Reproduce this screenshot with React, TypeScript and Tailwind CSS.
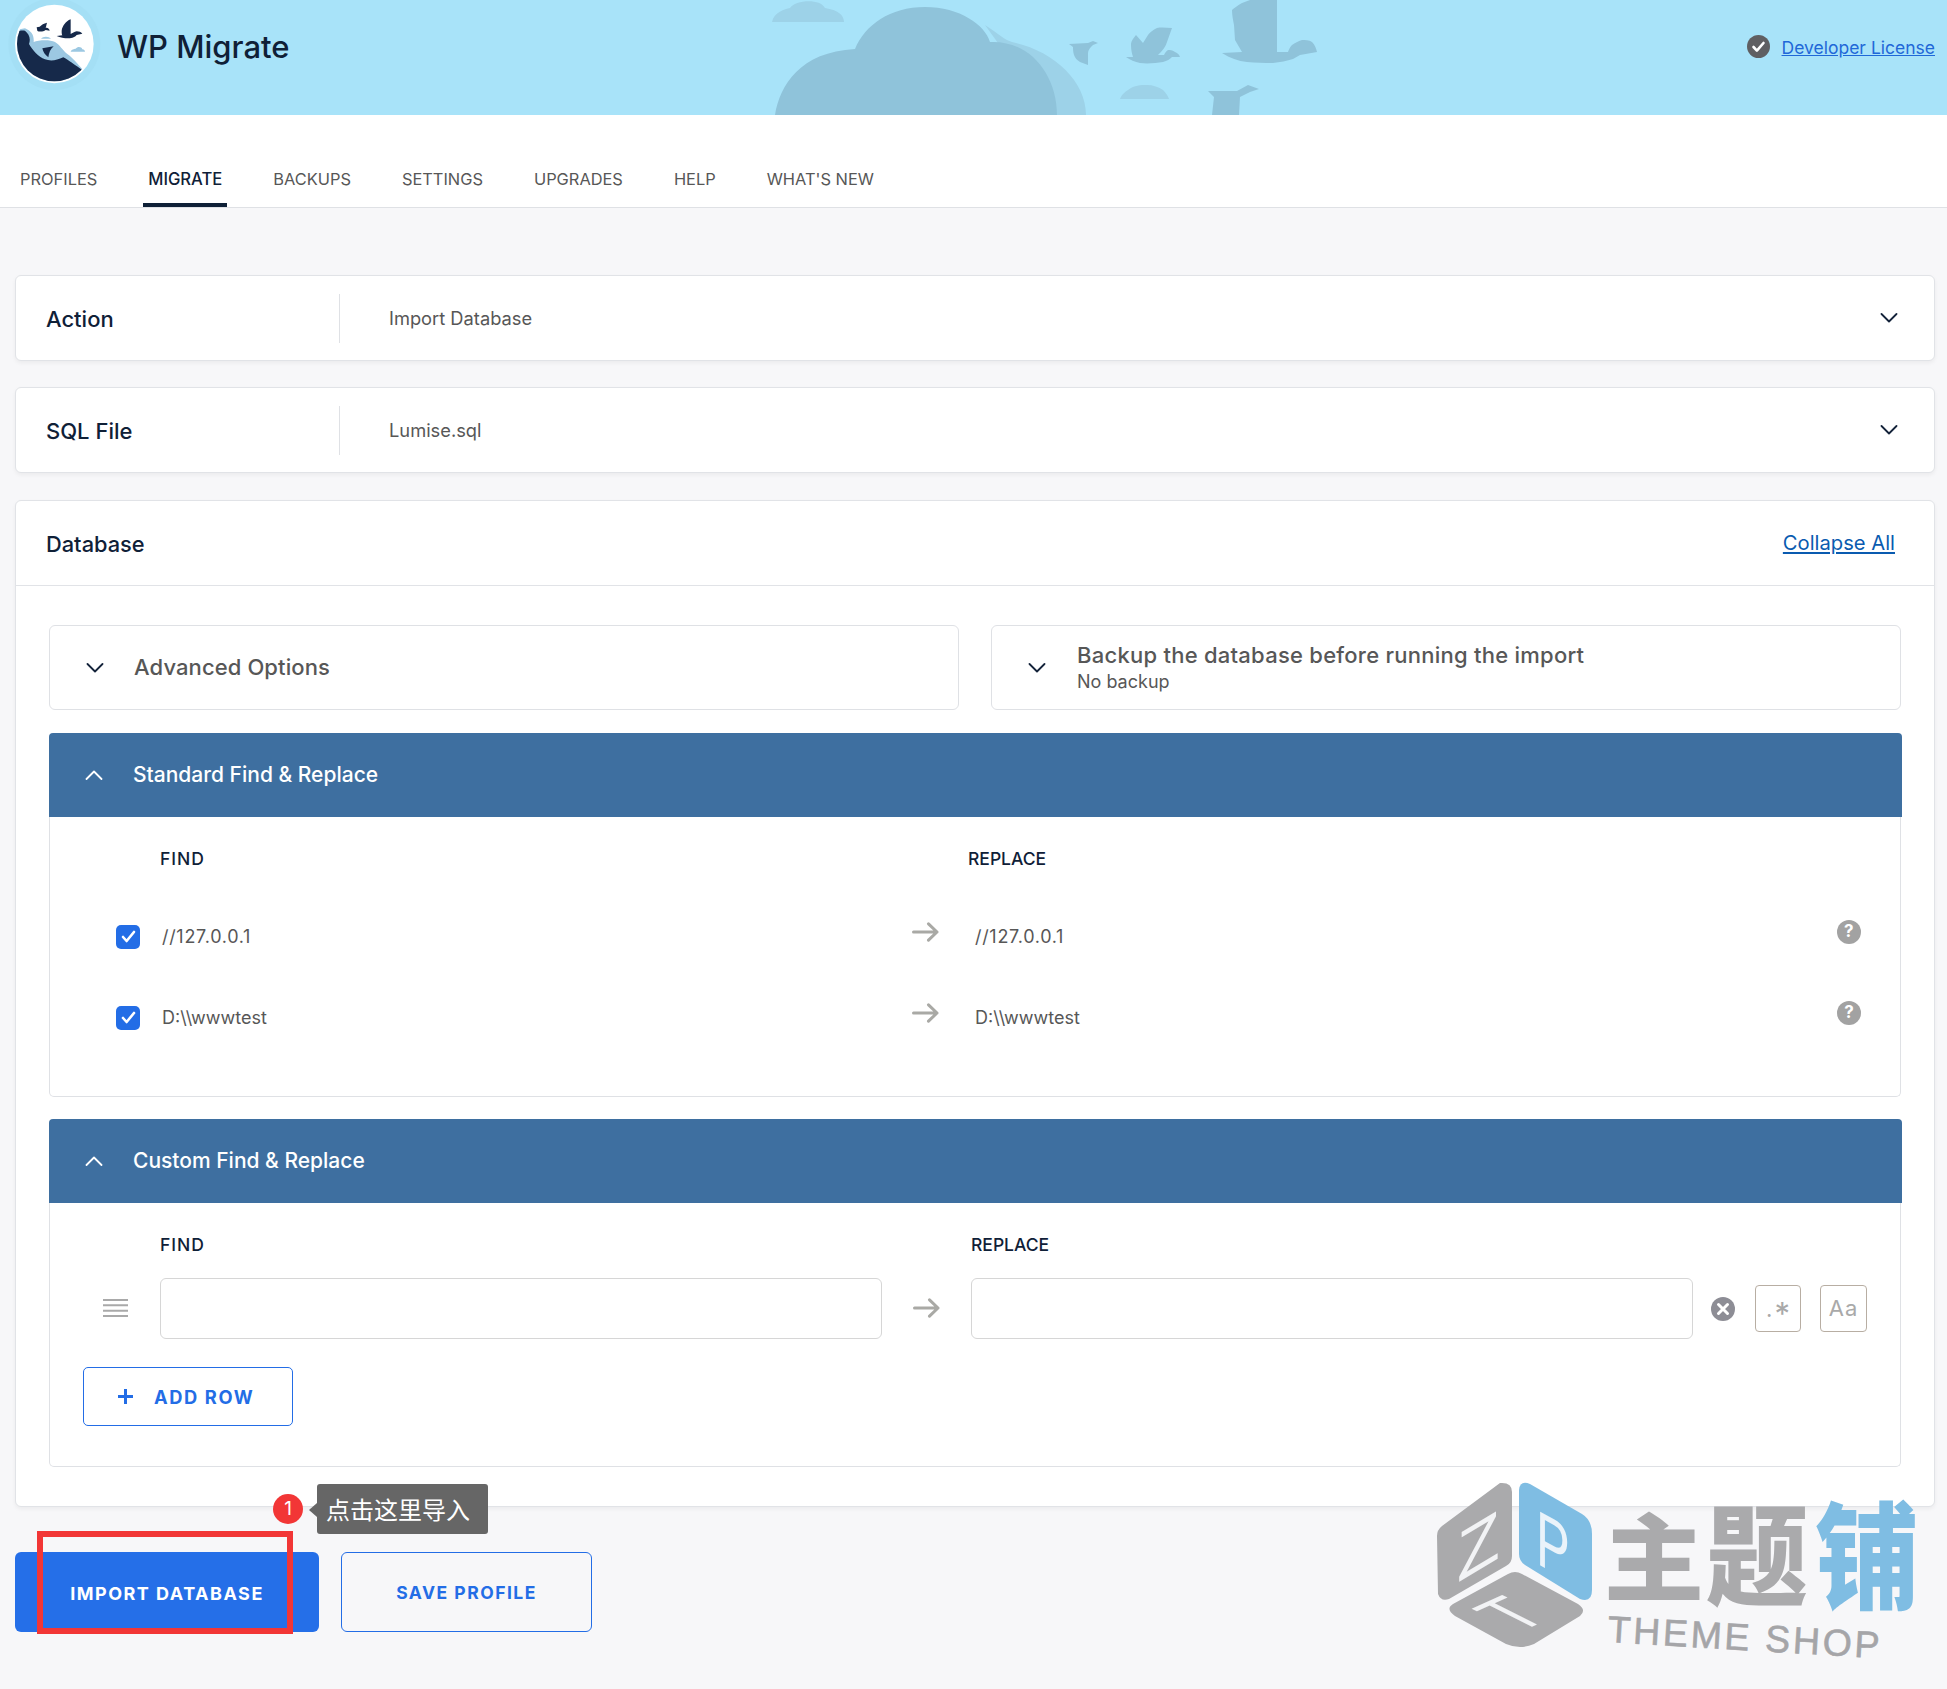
import React from "react";

const Chevron = ({ up = false, color = "#14233a" }: { up?: boolean; color?: string }) => (
  <svg width="18" height="10" viewBox="0 0 18 10" fill="none" className="shrink-0">
    <path d={up ? "M1.5 9 9 1.5 16.5 9" : "M1.5 1 9 8.5 16.5 1"} stroke={color} strokeWidth="1.8" strokeLinecap="round" strokeLinejoin="round" />
  </svg>
);

const Arrow = () => (
  <svg width="27" height="20" viewBox="0 0 27 20" fill="none" className="shrink-0">
    <path d="M1.5 10H25M16.500 1.800 25 10l-8.500 8.200" stroke="#a9a9a5" strokeWidth="3" strokeLinecap="round" strokeLinejoin="round" />
  </svg>
);

const Check = () => (
  <div className="flex h-6 w-6 shrink-0 items-center justify-center rounded-[5px] bg-[#236de6]">
    <svg width="15" height="13" viewBox="0 0 15 13" fill="none">
      <path d="M2 7l3.600 4L13 2" stroke="#fff" strokeWidth="2.600" strokeLinecap="round" strokeLinejoin="round" />
    </svg>
  </div>
);

const Help = () => (
  <div className="flex h-6 w-6 shrink-0 items-center justify-center rounded-full bg-[#a2a2a2] text-[17px] font-bold leading-none text-white">?</div>
);

const Logo = () => (
  <svg width="100" height="95" viewBox="0 0 300 285" className="ml-[5px] mb-[20px] shrink-0">
    <defs>
      <clipPath id="logoClip">
        <circle cx="148" cy="132" r="112" />
      </clipPath>
    </defs>
    <circle cx="148" cy="132" r="138" fill="#a4dff5" />
    <circle cx="148" cy="132" r="118" fill="#ffffff" />
    <g clipPath="url(#logoClip)">
      <path d="M30 90 60 85C78 92 88 105 86 126 100 120 135 118 150 126 165 135 172 150 188 163 205 175 215 190 235 210L150 260 30 200Z" fill="#9cc8e2" />
      <path d="M30 100C40 92 50 90 60 92 72 102 78 115 72 132 82 150 100 170 120 178 135 184 155 182 175 172 190 180 205 192 240 215L150 260 30 210Z" fill="#16294a" />
    </g>
    <path d="M112 145 146 139C136 148 132 158 130 172 120 165 114 155 112 145Z" fill="#16294a" />
    <path d="M95 82 104 80C110 74 116 70 126 68 124 74 124 78 122 84 126 82 132 84 134 92L122 90C114 96 102 96 97 92Z" fill="#16294a" />
    <path d="M197 58C182 64 172 78 170 92 170 98 170 102 172 106L155 108C165 112 178 115 190 115 202 115 212 110 215 105L232 101C228 96 222 94 215 94 208 95 202 100 197 102Z" fill="#16294a" />
    <path d="M108 116C113 108 132 108 138 116Z" fill="#9cc8e2" />
    <path d="M197 155C200 147 207 147 212 146 218 138 230 140 232 148 238 149 240 152 240 155Z" fill="#9cc8e2" />
  </svg>
);

const HeaderArt = () => (
  <svg className="absolute left-0 top-0 h-[115px] w-[1947px]" viewBox="0 0 1947 115" fill="none">
    <path d="M772 22C774 12 785 9 790 8 795 0 820-2 825 8 838 10 844 15 844 22Z" fill="#9dd2e8" />
    <path d="M985 25C1000 35 1005 40 1012 42 1052 50 1086 80 1086 115H1050Z" fill="#9dd2e8" />
    <path d="M775 115C780 85 800 52 855 49 865 25 890 7 925 7 960 7 985 25 990 42 1030 40 1057 75 1057 115Z" fill="#8fc3da" />
    <path d="M1120 99C1122 94 1125 92 1128 90 1135 85 1140 85 1147 85 1153 85 1159 87 1163 90 1166 93 1168 96 1169 99Z" fill="#9dd2e8" />
    <path d="M1069 44 1088 43 1093 41 1098 43 1093 45C1090 48 1088 50 1088 53V65L1080 62C1077 60 1075 58 1074 55 1073 52 1073 49 1073 47Z" fill="#8fc3da" />
    <path d="M1172 28C1167 28 1162 27 1157 28 1153 30 1150 32 1148 35L1143 43 1136 35C1132 40 1131 42 1131 45 1131 50 1132 54 1133 57H1126C1130 60 1135 62 1140 63 1148 64 1156 63 1163 62 1167 61 1170 59 1172 57H1180C1179 54 1177 53 1175 52 1172 50 1170 50 1168 50 1166 51 1165 53 1164 55H1158C1163 50 1166 46 1167 42Z" fill="#8fc3da" />
    <path d="M1277 0H1250L1242 3C1237 6 1234 8 1232 10 1232 15 1233 20 1234 25L1235 40 1242 52 1222 53C1230 58 1238 61 1247 62 1256 63 1265 63 1273 63 1280 62 1287 61 1293 59L1300 55 1317 52C1316 48 1315 45 1312 42 1309 40 1305 40 1302 40 1298 41 1295 43 1292 45 1290 47 1289 49 1288 52H1277Z" fill="#8fc3da" />
    <path d="M1208 91H1237L1248 85 1259 89 1250 92 1240 97 1239 115H1212L1214 97Z" fill="#8fc3da" />
  </svg>
);

const Watermark = () => (
  <svg className="pointer-events-none absolute left-0 top-0 h-[1689px] w-[1947px]" viewBox="0 0 1947 1689" fill="none">
    <path d="M1500 1483Q1512 1482 1512 1492V1556Q1512 1563 1506 1566L1449 1599Q1441 1602 1438 1594L1437 1536Q1437 1530 1442 1526Z" fill="#aaaaac" />
    <path d="M1519 1490Q1520 1480 1530 1484L1582 1514Q1592 1520 1592 1534V1590Q1592 1603 1580 1599L1525 1565Q1519 1561 1519 1554Z" fill="#7fbde3" />
    <path d="M1508 1574Q1515 1570 1522 1574L1578 1604Q1587 1610 1580 1616L1534 1644Q1520 1650 1506 1644L1455 1616Q1445 1609 1453 1604Z" fill="#aaaaac" />
    <text transform="matrix(1 -.6 0 1 1457 1583)" fontFamily="'Liberation Sans',sans-serif" fontSize="70" fill="#f2f3f5">Z</text>
    <text transform="matrix(.65 .36 0 1 1536 1563)" fontFamily="'Liberation Sans',sans-serif" fontSize="78" fill="#eaf3fa">P</text>
    <text transform="matrix(1 -.45 1.28 .64 1518 1633)" fontFamily="'Liberation Sans',sans-serif" fontSize="54" fill="#f2f3f5">T</text>
    <text transform="matrix(1 0 0 .95 1604 1594)" fontFamily="'Noto Sans CJK SC',sans-serif" fontWeight="900" fontSize="100" fill="#aaaaac">主</text>
    <text transform="matrix(1 0 0 1.08 1706 1597)" fontFamily="'Noto Sans CJK SC',sans-serif" fontWeight="900" fontSize="102" fill="#aaaaac">题</text>
    <text transform="matrix(1 0 0 1.12 1815 1600)" fontFamily="'Noto Sans CJK SC',sans-serif" fontWeight="900" fontSize="104" fill="#7fbde3">铺</text>
    <text transform="translate(1607 1642) rotate(3.4)" fontFamily="'Liberation Sans',sans-serif" fontSize="37.500" letterSpacing="2.700" stroke="#a5a5a8" strokeWidth="0.600" fill="#a5a5a8">THEME SHOP</text>
  </svg>
);

const Row = ({ value, wide }: { value: string; wide?: boolean }) => (
  <div className={wide ? "flex h-[81px] items-center pl-[66px] text-[18px] tracking-[0.7px] text-[#575757]" : "flex h-[81px] items-center pl-[66px] text-[18px] text-[#575757]"}>
    <Check />
    <div className="ml-[22px] w-[750px]">{value}</div>
    <div className="mb-[10px]"><Arrow /></div>
    <div className="ml-[36px] w-[862px]">{value}</div>
    <div className="mb-[10px]"><Help /></div>
  </div>
);

const SectionHead = ({ title }: { title: string }) => (
  <div className="-ml-px -mr-[2px] flex h-[84px] items-center rounded-t-[4px] bg-[#3e6fa0] pl-[36px] text-[21px] font-medium text-white">
    <Chevron up color="#ffffff" />
    <span className="ml-[30px]">{title}</span>
  </div>
);

const SelectCard = ({ label, value }: { label: string; value: string }) => (
  <div className="flex h-[86px] items-center rounded-[6px] border border-[#e1e3e7] bg-white shadow-[0_2px_4px_rgba(0,0,0,0.05)]">
    <div className="w-[323px] pl-[30px] pt-[2px] text-[22px] font-medium text-[#0f2037]">{label}</div>
    <div className="h-[49px] w-px bg-[#dfe1e5]" />
    <div className="flex-1 pl-[49px] pt-px text-[18.300px] text-[#575757]">{value}</div>
    <div className="mr-[36px]"><Chevron /></div>
  </div>
);

const tabs = ["PROFILES", "MIGRATE", "BACKUPS", "SETTINGS", "UPGRADES", "HELP", "WHAT'S NEW"];

export default function App() {
  return (
    <div className="relative h-[1689px] w-[1947px] overflow-hidden bg-[#f7f7f9] font-['Inter',sans-serif]">
      <header className="relative flex h-[115px] items-center bg-[#a8e3f9]">
        <HeaderArt />
        <div className="relative flex items-center">
          <Logo />
          <div className="ml-[12px] mb-[21px] text-[31px] font-medium text-[#0f2037]">WP Migrate</div>
        </div>
        <div className="relative ml-auto mr-[12px] mb-[22px] flex items-center">
          <svg width="23" height="23" viewBox="0 0 23 23" fill="none">
            <circle cx="11.500" cy="11.500" r="11.500" fill="#5f5f62" />
            <path d="M6.500 12l3.400 3.600 6.600-7.600" stroke="#fff" strokeWidth="2.600" strokeLinecap="round" strokeLinejoin="round" />
          </svg>
          <a className="ml-[12px] mt-[4px] text-[17.500px] text-[#1f68d8] underline">Developer License</a>
        </div>
      </header>

      <nav className="flex h-[93px] items-end gap-[41px] border-b border-[#dfe1e5] bg-white pl-[15px]">
        {tabs.map((t) => (
          <div
            key={t}
            className={
              t === "MIGRATE"
                ? "border-b-4 border-[#0f2037] px-[5px] pb-[14px] text-[16.600px] font-medium leading-[20px] text-[#0f2037]"
                : "border-b-4 border-transparent px-[5px] pb-[14px] text-[16.400px] leading-[20px] text-[#575757]"
            }
          >
            {t}
          </div>
        ))}
      </nav>

      <main className="flex flex-col pl-[15px] pr-[12px] pt-[67px]">
        <div className="flex flex-col gap-[26px]">
          <SelectCard label="Action" value="Import Database" />
          <SelectCard label="SQL File" value="Lumise.sql" />

          <section className="mt-px h-[1007px] rounded-[6px] border border-[#e1e3e7] bg-white shadow-[0_2px_4px_rgba(0,0,0,0.05)]">
            <div className="flex h-[85px] items-center justify-between border-b border-[#e1e3e7] pl-[30px] pr-[39px]">
              <div className="pt-[2px] text-[21.800px] font-medium text-[#0f2037]">Database</div>
              <a className="text-[20.200px] text-[#0a5bb0] underline">Collapse All</a>
            </div>

            <div className="px-[33px] pt-[39px]">
              <div className="grid grid-cols-2 gap-[32px]">
                <div className="flex h-[85px] items-center rounded-[6px] border border-[#dfe1e5] pl-[36px]">
                  <Chevron />
                  <span className="ml-[30px] text-[22px] font-medium tracking-[0.1px] text-[#575757]">Advanced Options</span>
                </div>
                <div className="flex h-[85px] items-center rounded-[6px] border border-[#dfe1e5] pl-[36px]">
                  <Chevron />
                  <div className="ml-[31px]">
                    <div className="text-[22px] font-medium leading-[29px] tracking-[0.25px] text-[#575757]">Backup the database before running the import</div>
                    <div className="text-[18px] leading-[24px] text-[#575757]">No backup</div>
                  </div>
                </div>
              </div>

              <div className="mt-[23px] rounded-[5px] border border-t-0 border-[#dfe1e5]">
                <SectionHead title="Standard Find & Replace" />
                <div className="h-[279px]">
                  <div className="flex pl-[110px] pt-[30px] text-[17.500px] font-medium leading-[24px] text-[#0f2037]">
                    <div className="w-[808px] tracking-[1px]">FIND</div>
                    <div>REPLACE</div>
                  </div>
                  <div className="mt-[25px]">
                    <Row value="//127.0.0.1" wide />
                    <Row value="D:\\wwwtest" />
                  </div>
                </div>
              </div>

              <div className="mt-[22px] rounded-[5px] border border-t-0 border-[#dfe1e5]">
                <SectionHead title="Custom Find & Replace" />
                <div className="h-[263px]">
                  <div className="flex pl-[110px] pt-[30px] text-[17.500px] font-medium leading-[24px] text-[#0f2037]">
                    <div className="w-[811px] tracking-[1px]">FIND</div>
                    <div>REPLACE</div>
                  </div>
                  <div className="mt-[21px] flex items-center pl-[53px]">
                    <svg width="25" height="20" viewBox="0 0 25 20" fill="none" className="mb-[2px] shrink-0">
                      <path d="M0 2h25M0 7.300h25M0 12.700h25M0 18h25" stroke="#a9a9a9" strokeWidth="2" />
                    </svg>
                    <div className="ml-[32px] h-[61px] w-[722px] rounded-[6px] border border-[#d6d6d6] bg-white" />
                    <div className="mb-[2px] flex w-[89px] justify-center"><Arrow /></div>
                    <div className="h-[61px] w-[722px] rounded-[6px] border border-[#d6d6d6] bg-white" />
                    <div className="ml-[18px] flex h-6 w-6 shrink-0 items-center justify-center rounded-full bg-[#8d8d95]">
                      <svg width="14" height="14" viewBox="0 0 14 14" fill="none">
                        <path d="M2.500 2.500l9 9M11.500 2.500l-9 9" stroke="#fff" strokeWidth="3" strokeLinecap="round" />
                      </svg>
                    </div>
                    <div className="ml-[20px] flex h-[47px] w-[46px] items-center justify-center gap-[2px] rounded-[4px] border border-[#b8aea3] text-[#a9a9a9]">
                      <span className="text-[22px] leading-none">.</span>
                      <span className="pt-[9px] text-[31px] leading-none">*</span>
                    </div>
                    <div className="ml-[19px] flex h-[47px] w-[47px] items-center justify-center rounded-[4px] border border-[#b8aea3] text-[22px] tracking-[1px] text-[#a9a9a9]">Aa</div>
                  </div>
                  <button className="ml-[33px] mt-[28px] flex h-[59px] w-[210px] items-center rounded-[5px] border border-[#236de6] bg-white pl-[34px] text-[18.300px] font-bold tracking-[1.600px] text-[#236de6]">
                    <svg width="15" height="15" viewBox="0 0 15 15" fill="none" className="shrink-0">
                      <path d="M7.500 0v15M0 7.500h15" stroke="#236de6" strokeWidth="3" />
                    </svg>
                    <span className="ml-[21px] mt-[3px]">ADD ROW</span>
                  </button>
                </div>
              </div>
            </div>
          </section>
        </div>

        <div className="mt-[45px] flex gap-[22px]">
          <button className="flex h-[80px] w-[304px] items-center justify-center rounded-[6px] bg-[#256fe8] pt-[2px] text-[18px] font-bold tracking-[1.500px] text-white">IMPORT DATABASE</button>
          <button className="flex h-[80px] w-[251px] items-center justify-center rounded-[6px] border border-[#236de6] pt-[2px] text-[17.500px] font-bold tracking-[1.500px] text-[#236de6]">SAVE PROFILE</button>
        </div>
      </main>

      <Watermark />

      <div className="absolute left-[37px] top-[1531px] h-[103px] w-[256px] border-[6px] border-[#f23636]" />
      <div className="absolute left-[273px] top-[1494px] flex h-[30px] w-[30px] items-center justify-center rounded-full bg-[#f23636] text-[19px] text-white">1</div>
      <div className="absolute left-[317px] top-[1484px] flex h-[50px] w-[171px] items-center rounded-[3px] bg-[#666666] pl-[9px] font-['Noto_Sans_CJK_SC',sans-serif] text-[24px] text-white">
        <div className="absolute left-[-8px] top-[19px] h-0 w-0 border-y-[7px] border-r-[8px] border-y-transparent border-r-[#666666]" />
        点击这里导入
      </div>
    </div>
  );
}
